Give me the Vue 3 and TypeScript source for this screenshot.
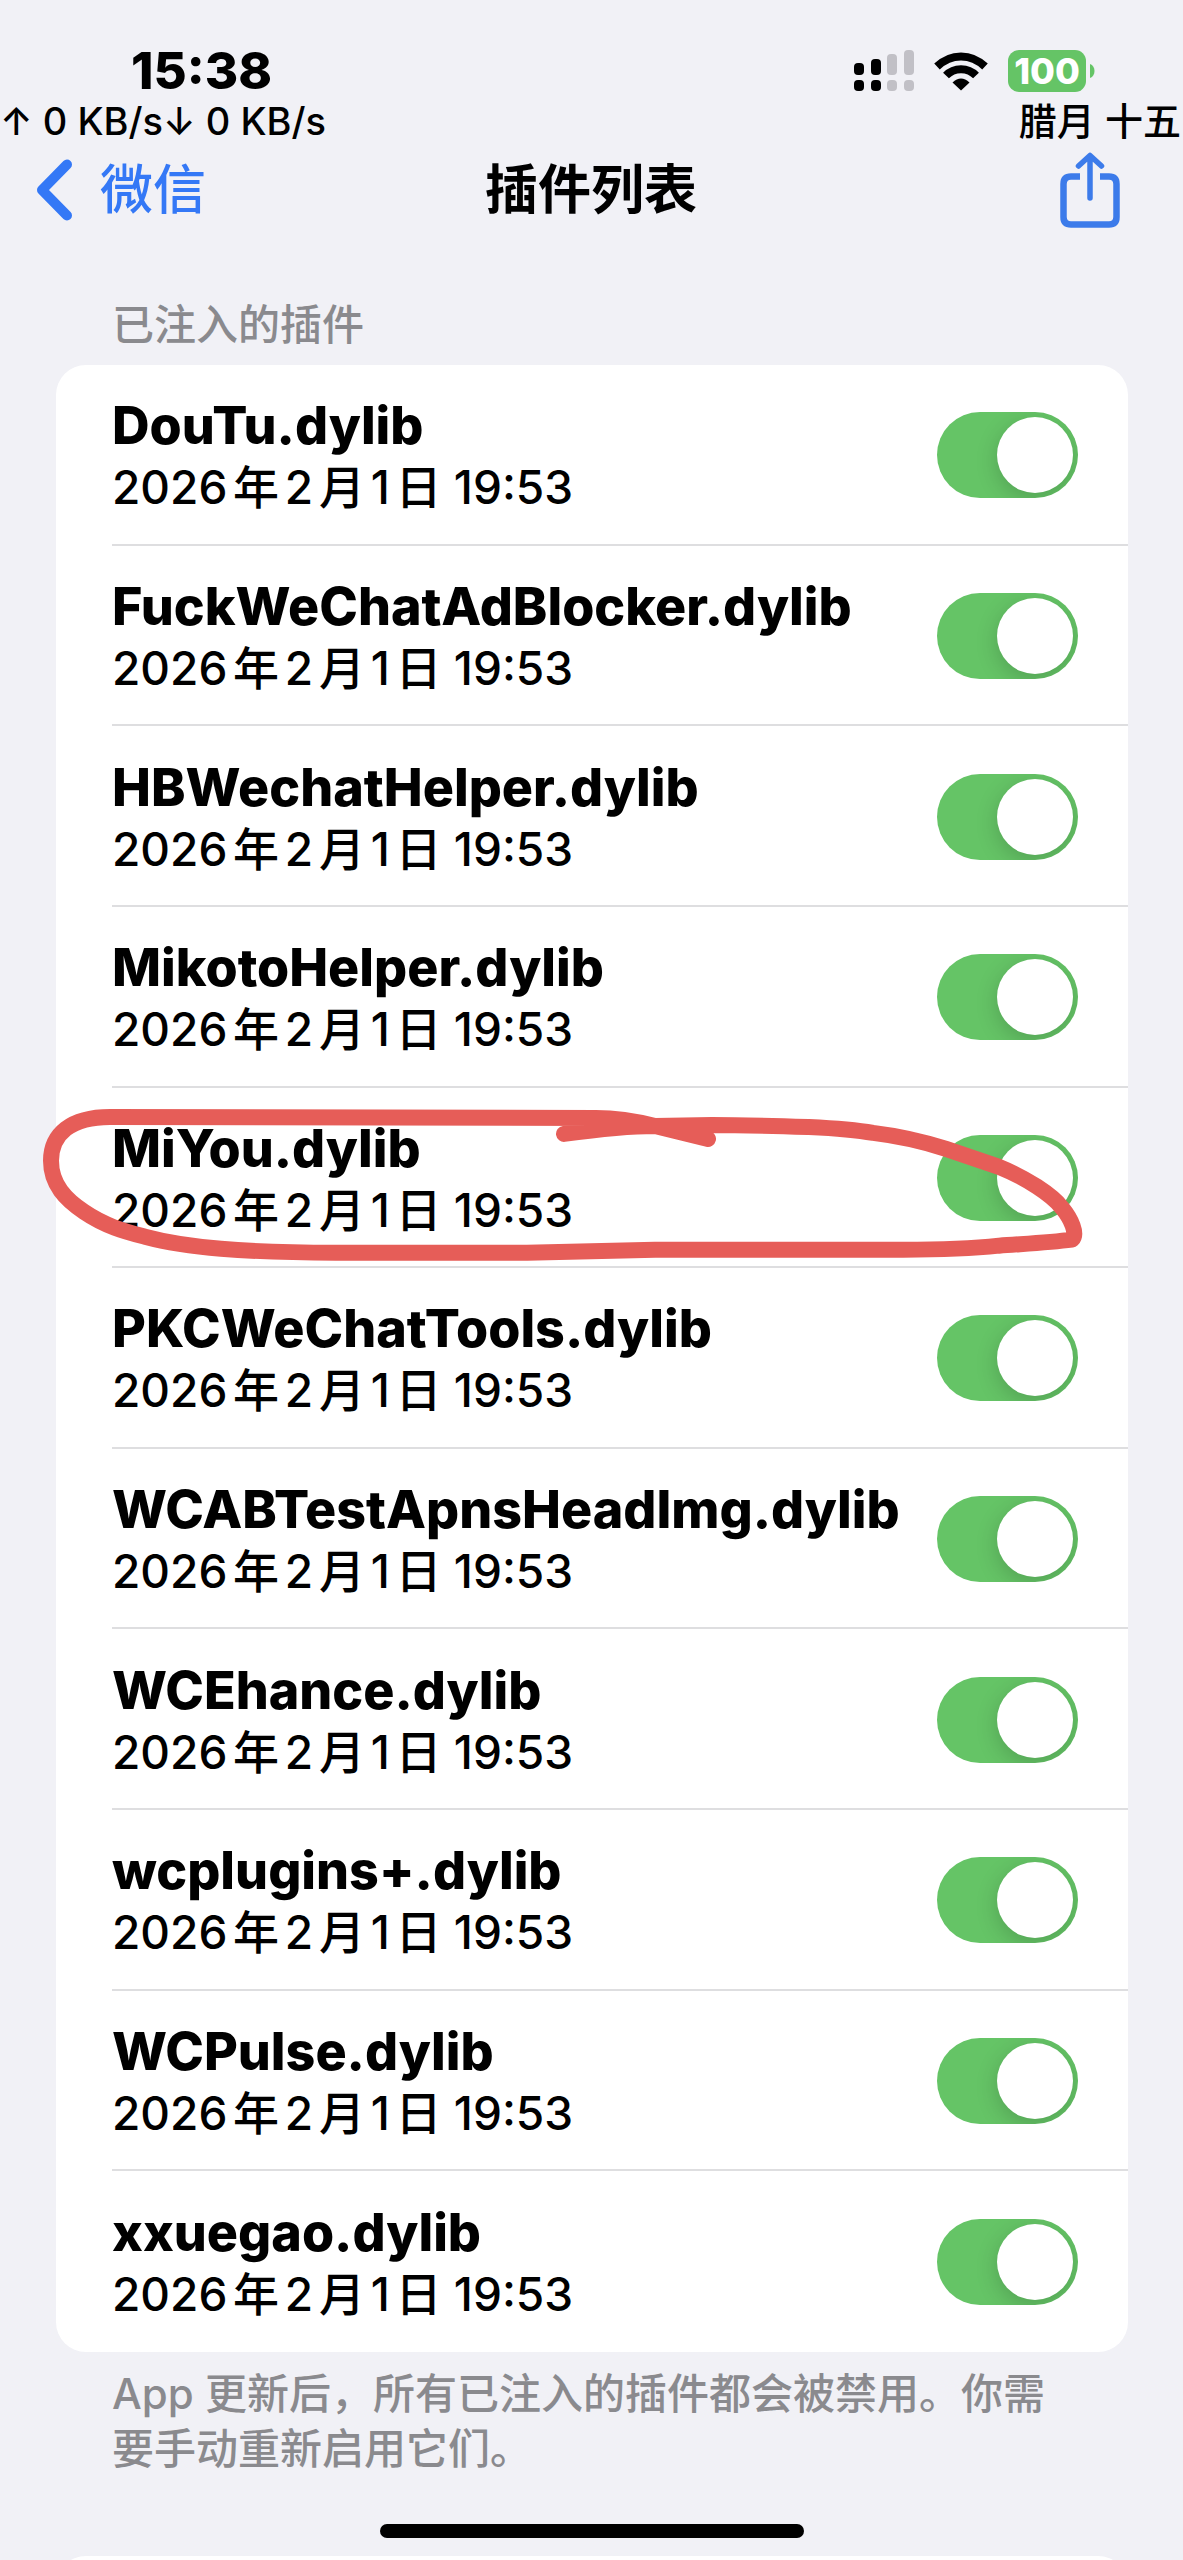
<script setup lang="ts">
import { reactive } from 'vue'

interface Plugin {
  name: string
  date: string
  enabled: boolean
  marked?: boolean
}

const date = '2026年2月1日 19:53'

const plugins = reactive<Plugin[]>([
  { name: 'DouTu.dylib', date, enabled: true },
  { name: 'FuckWeChatAdBlocker.dylib', date, enabled: true },
  { name: 'HBWechatHelper.dylib', date, enabled: true },
  { name: 'MikotoHelper.dylib', date, enabled: true },
  { name: 'MiYou.dylib', date, enabled: true, marked: true },
  { name: 'PKCWeChatTools.dylib', date, enabled: true },
  { name: 'WCABTestApnsHeadImg.dylib', date, enabled: true },
  { name: 'WCEhance.dylib', date, enabled: true },
  { name: 'wcplugins+.dylib', date, enabled: true },
  { name: 'WCPulse.dylib', date, enabled: true },
  { name: 'xxuegao.dylib', date, enabled: true },
])
</script>

<template>
  <div class="page">
    <header class="status">
      <div class="status-left">
        <div class="clock">15:38</div>
        <div class="network">↑ 0 KB/s↓ 0 KB/s</div>
      </div>
      <div class="status-right">
        <div class="indicators">
          <svg class="signal" width="60" height="42" viewBox="0 0 60 42" aria-hidden="true">
            <g fill="#000">
              <rect x="0" y="13" width="10" height="12" rx="4" />
              <rect x="17" y="9" width="10" height="16" rx="4" />
              <rect x="0" y="30" width="10" height="11" rx="4" />
              <rect x="17" y="30" width="10" height="11" rx="4" />
            </g>
            <g fill="#c1c0c6">
              <rect x="33" y="4" width="10" height="21" rx="4" />
              <rect x="50" y="0" width="10" height="25" rx="4" />
              <rect x="33" y="30" width="10" height="11" rx="4" />
              <rect x="50" y="30" width="10" height="11" rx="4" />
            </g>
          </svg>
          <svg class="wifi" width="54" height="40" viewBox="0 0 54 40" aria-hidden="true">
            <g fill="none" stroke="#000" stroke-width="8">
              <path d="M3 15.5C17 2 37 2 51 15.5" />
              <path d="M12 24.5C20 16 34 16 42 24.5" />
            </g>
            <path d="M27 39.500L18.500 31.500Q27 23.500 35.500 31.500Z" fill="#000" />
          </svg>
          <div class="battery">
            <span class="battery-body">100</span>
            <svg width="5" height="14" viewBox="0 0 5 14" aria-hidden="true">
              <path d="M0 0C6 2 6 12 0 14Z" fill="#65c466" />
            </svg>
          </div>
        </div>
        <div class="lunar">腊月 十五</div>
      </div>
    </header>

    <nav class="nav">
      <a class="back" href="#">
        <svg width="36" height="62" viewBox="0 0 36 62" aria-hidden="true">
          <path d="M31 5.500L6 31L31 56.500" fill="none" stroke="#3478f6" stroke-width="10" stroke-linecap="round" stroke-linejoin="round" />
        </svg>
        <span>微信</span>
      </a>
      <h1>插件列表</h1>
      <button class="share" type="button" aria-label="分享">
        <svg width="60" height="76" viewBox="0 0 60 76" aria-hidden="true">
          <g fill="none" stroke="#3c7bea" stroke-width="6.500">
            <path d="M20 24.500H11Q3.500 24.500 3.500 32V65Q3.500 72.500 11 72.500H49Q56.500 72.500 56.500 65V32Q56.500 24.500 49 24.500H40" />
            <path d="M30 46V4M18.500 14L30 3.500L41.500 14" stroke-width="5.500" stroke-linecap="round" stroke-linejoin="round" />
          </g>
        </svg>
      </button>
    </nav>

    <main>
      <h2>已注入的插件</h2>
      <ul class="card list">
        <li v-for="(plugin, i) in plugins" :key="plugin.name" class="row">
          <div class="content">
            <div class="text">
              <label class="name" :for="`plugin-${i}`">{{ plugin.name }}</label>
              <span class="date">{{ plugin.date }}</span>
            </div>
            <input :id="`plugin-${i}`" v-model="plugin.enabled" class="switch" type="checkbox" role="switch" />
          </div>
          <svg v-if="plugin.marked" class="mark" viewBox="0 0 1072 181" preserveAspectRatio="none" aria-hidden="true">
            <path
              d="M652 51L599 38C579 33 561 30 540 30L54 29C15 29 -5 46 -5 73C-5 97 10 112 28 124C50 139 70 144 89 149C115 156 140 159 165 161C200 164 240 165 280 165L471 165L599 162L847 162C885 162 915 161 943 158C970 156 993 155 1016 152C1022 146 1015 131 1006 120C996 107 970 90 943 79L890 61C865 53 842 48 817 45C795 41 773 40 752 39C720 38 688 37 656 37L599 38C567 38 537 42 508 46"
            />
          </svg>
        </li>
      </ul>
      <p class="note">App 更新后，所有已注入的插件都会被禁用。你需要手动重新启用它们。</p>
      <div class="card next"></div>
    </main>
    <div class="home"></div>
  </div>
</template>

<style>
body {
  margin: 0;
}
</style>

<style scoped>
.page {
  height: 100vh;
  overflow: hidden;
  background: #f1f1f6;
  color: #000;
  font-family: Inter, 'Noto Sans CJK SC', sans-serif;
}

.status {
  display: flex;
  justify-content: space-between;
  padding: 42px 2px 0 0;
}

.clock {
  margin-left: 131px;
  font-size: 51px;
  font-weight: 800;
  line-height: 58px;
}

.network,
.lunar {
  font-size: 38px;
  font-weight: 500;
  line-height: 42px;
  white-space: nowrap;
}

.status-right {
  display: flex;
  flex-direction: column;
  align-items: flex-end;
}

.indicators {
  display: flex;
  align-items: center;
  height: 58px;
  margin-right: 86px;
}

.wifi {
  margin: 0 20px;
}

.battery {
  display: flex;
  align-items: center;
  gap: 4px;
}

.battery-body {
  width: 78px;
  border-radius: 11px;
  background: #65c466;
  color: #fff;
  font-size: 36px;
  font-weight: 800;
  line-height: 42px;
  text-align: center;
}

.nav {
  display: grid;
  grid-template-columns: 1fr auto 1fr;
  align-items: center;
  height: 96px;
  padding: 0 63px 0 36px;
}

.back {
  display: flex;
  align-items: center;
  gap: 28px;
  color: #3478f6;
  font-size: 53px;
  font-weight: 500;
  line-height: 60px;
  text-decoration: none;
}

h1 {
  margin: 0 0 0 26px;
  font-size: 53px;
  font-weight: 700;
  line-height: 60px;
}

.share {
  justify-self: end;
  padding: 0;
  border: 0;
  background: none;
}

.share svg,
.back svg {
  display: block;
}

main {
  padding: 0 55px 0 56px;
}

h2 {
  margin: 0;
  padding: 60px 56px 13px;
  color: #8a8a8e;
  font-size: 42px;
  font-weight: 500;
  line-height: 54px;
}

.card {
  margin: 0;
  border-radius: 30px;
  background: #fff;
}

.list {
  display: grid;
  grid-auto-rows: 1fr;
  min-height: 1987px;
  padding: 0;
  list-style: none;
}

.row {
  position: relative;
  display: flex;
  padding-left: 56px;
}

.content {
  display: flex;
  flex: 1;
  align-items: center;
  justify-content: space-between;
  padding: 2px 50px 0 0;
  border-bottom: 2px solid #dedee0;
}

.row:last-child .content {
  border-color: transparent;
}

.text {
  display: flex;
  flex-direction: column;
  padding-top: 4px;
  white-space: nowrap;
}

.name {
  font-size: 52px;
  font-weight: 800;
  line-height: 60px;
}

.date {
  font-size: 46px;
  font-weight: 500;
  line-height: 62px;
  text-autospace: normal;
}

.switch {
  flex: none;
  appearance: none;
  width: 141px;
  height: 86px;
  margin: 0;
  padding: 5px;
  box-sizing: border-box;
  overflow: hidden;
  border-radius: 43px;
  background: #e9e9ea;
}

.switch::before {
  content: '';
  display: block;
  width: 76px;
  height: 76px;
  border-radius: 50%;
  background: #fff;
  box-shadow: 0 6px 22px rgba(0, 0, 0, 0.18);
}

.switch:checked {
  background: #65c466;
}

.switch:checked::before {
  margin-left: auto;
}

.mark {
  position: absolute;
  inset: 0;
  width: 100%;
  height: 100%;
  overflow: visible;
  pointer-events: none;
}

.mark path {
  fill: none;
  stroke: #e65d58;
  stroke-width: 16px;
  stroke-linecap: round;
  stroke-linejoin: round;
}

.note {
  margin: 14px 0 80px;
  padding: 0 56px;
  color: #8a8a8e;
  font-size: 42px;
  font-weight: 500;
  line-height: 55px;
}

.next {
  height: 181px;
}

.home {
  position: fixed;
  bottom: 22px;
  left: 50%;
  width: 424px;
  height: 14px;
  margin-left: -212px;
  border-radius: 7px;
  background: #000;
}
</style>
